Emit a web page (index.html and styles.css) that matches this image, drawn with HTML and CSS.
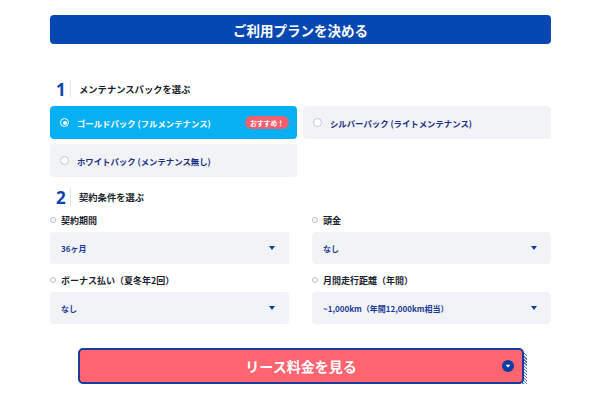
FILE: index.html
```html
<!DOCTYPE html>
<html lang="ja">
<head>
<meta charset="utf-8">
<link rel="stylesheet" href="styles.css">
</head>
<body>
<div class="page">
  <div class="title-bar">ご利用プランを決める</div>

  <div class="step">
    <span class="step-num">1</span>
    <span class="step-text">メンテナンスパックを選ぶ</span>
  </div>
  <div class="packs">
    <div class="pack pack-active">
      <span class="radio radio-on"></span>
      <span class="pack-name">ゴールドパック (フルメンテナンス)</span>
      <span class="badge">おすすめ！</span>
    </div>
    <div class="pack">
      <span class="radio"></span>
      <span class="pack-name">シルバーパック (ライトメンテナンス)</span>
    </div>
    <div class="pack">
      <span class="radio"></span>
      <span class="pack-name">ホワイトパック (メンテナンス無し)</span>
    </div>
  </div>

  <div class="step step-2">
    <span class="step-num">2</span>
    <span class="step-text">契約条件を選ぶ</span>
  </div>
  <div class="fields">
    <div class="field">
      <div class="field-label"><span class="dot"></span>契約期間</div>
      <div class="select"><span>36ヶ月</span><span class="caret"></span></div>
    </div>
    <div class="field">
      <div class="field-label"><span class="dot"></span>頭金</div>
      <div class="select"><span>なし</span><span class="caret"></span></div>
    </div>
    <div class="field">
      <div class="field-label"><span class="dot"></span>ボーナス払い（夏冬年2回）</div>
      <div class="select"><span>なし</span><span class="caret"></span></div>
    </div>
    <div class="field">
      <div class="field-label"><span class="dot"></span>月間走行距離（年間）</div>
      <div class="select"><span>~1,000km（年間12,000km相当）</span><span class="caret"></span></div>
    </div>
  </div>

  <div class="cta-wrap">
    <div class="cta">
      <span class="cta-text">リース料金を見る</span>
      <span class="cta-icon">
        <svg width="12" height="12" viewBox="0 0 12 12"><circle cx="6" cy="6" r="6" fill="#0b3ea3"/><path d="M3.6 4.8 H8.4 L6 7.6 Z" fill="#fff"/></svg>
      </span>
    </div>
  </div>
</div>
</body>
</html>
```

FILE: styles.css
```css
* { box-sizing: border-box; }
html, body { margin: 0; padding: 0; background: #fff; }
body {
  font-family: "Noto Sans CJK JP", "Noto Sans", sans-serif;
  color: #1b1f2e;
}
.page {
  width: 600px;
  padding: 15px 49px 0 50px;
}
.title-bar {
  height: 29px;
  background: #0648b1;
  border-radius: 4px;
  color: #fff;
  font-weight: 700;
  font-size: 13.5px;
  display: flex;
  align-items: center;
  justify-content: center;
}
.step {
  margin-top: 36px;
  height: 18px;
  display: flex;
  align-items: center;
  padding-left: 6px;
}
.step-2 { margin-top: 11px; }
.step-num {
  font-family: "Noto Sans", sans-serif;
  font-weight: 700;
  font-size: 17px;
  color: #0a44ad;
  width: 15px;
  border-right: 1px solid #e3e5ea;
  margin-right: 8px;
  height: 18px;
  display: flex;
  align-items: center;
}
.step-text {
  font-weight: 700;
  font-size: 9.3px;
  color: #1b1f2e;
}
.packs {
  margin-top: 8px;
  display: grid;
  grid-template-columns: 247px 248px;
  column-gap: 6px;
  row-gap: 5px;
}
.pack {
  height: 33px;
  background: #f2f3f6;
  border-radius: 4px;
  display: flex;
  align-items: center;
  padding: 0 8px 0 10px;
}
.pack-active { background: #07b0f3; }
.pack-name {
  font-weight: 700;
  font-size: 8.4px;
  color: #1a2f86;
  margin-left: 8px;
}
.pack-active .pack-name { color: #fff; }
.radio {
  width: 9px;
  height: 9px;
  border-radius: 50%;
  border: 1px solid #c4c7ce;
  background: #fff;
  flex: none;
}
.radio-on {
  border: 1.5px solid #fff;
  background: transparent;
  display: flex;
  align-items: center;
  justify-content: center;
}
.radio-on::after {
  content: "";
  width: 4px;
  height: 4px;
  border-radius: 50%;
  background: #fff;
}
.badge {
  margin-left: auto;
  background: #f0606f;
  color: #fff;
  font-weight: 700;
  font-size: 6.8px;
  height: 13px;
  padding: 0 5px;
  border-radius: 7px;
  display: flex;
  align-items: center;
}
.fields {
  margin-top: 7px;
  display: grid;
  grid-template-columns: 239px 239px;
  column-gap: 23px;
  row-gap: 9px;
}
.field-label {
  height: 14px;
  display: flex;
  align-items: center;
  font-weight: 700;
  font-size: 9px;
  color: #1b1f2e;
}
.dot {
  width: 6px;
  height: 6px;
  border-radius: 50%;
  border: 1px solid #b7bac1;
  margin: 0 5px 0 0;
}
.select {
  margin-top: 5px;
  height: 32px;
  background: #f2f3f6;
  border-radius: 4px;
  display: flex;
  align-items: center;
  justify-content: space-between;
  padding: 0 14px 0 11px;
  font-weight: 700;
  font-size: 8px;
  color: #1a3a96;
}
.caret {
  width: 0;
  height: 0;
  border-left: 3px solid transparent;
  border-right: 3px solid transparent;
  border-top: 4px solid #0b3ea3;
}
.cta-wrap {
  margin-top: 24px;
  display: flex;
  justify-content: center;
  padding-left: 1px;
  isolation: isolate;
}
.cta {
  position: relative;
  width: 446px;
  height: 36px;
  background: #ff6471;
  border: 2px solid #173c9c;
  border-radius: 5px;
  display: flex;
  align-items: center;
  justify-content: center;
}
.cta::after {
  content: "";
  position: absolute;
  left: 1px;
  top: 1px;
  right: -5px;
  bottom: -5px;
  border-radius: 5px;
  z-index: -1;
  background: repeating-linear-gradient(45deg, #5a72b9 0 1px, #eef1f8 1px 2.2px);
}
.cta-text {
  color: #fff;
  font-weight: 700;
  font-size: 14px;
}
.cta-icon {
  position: absolute;
  right: 8px;
  top: 50%;
  margin-top: -6px;
  width: 12px;
  height: 12px;
  display: flex;
}
```
